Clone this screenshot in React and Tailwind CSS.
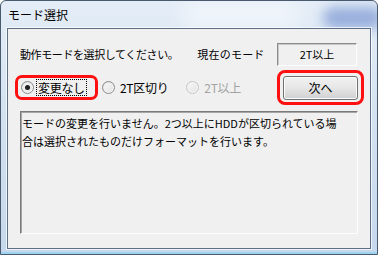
const Radio = ({ checked, disabled }) => (
  <span
    className={`relative flex h-[13px] w-[13px] shrink-0 items-center justify-center rounded-full border ${
      disabled
        ? 'border-[#c4c4c4] bg-[#f4f4f4]'
        : 'border-[#8a8a8a] bg-gradient-to-br from-[#dcdcdc] to-[#ffffff]'
    }`}
  >
    <span className="h-[9px] w-[9px] rounded-full bg-gradient-to-br from-[#f6f6f6] to-[#e4e4e4]" />
    {checked && (
      <span className="absolute h-[5px] w-[5px] rounded-full bg-[#1f1f1f]" />
    )}
  </span>
);

const App = () => {
  return (
    <div className="relative flex h-[255px] w-[378px] flex-col overflow-hidden rounded-t-[6px] border border-[#4a5a6e] bg-gradient-to-b from-[#e4edf7] via-[#d2e1f0] to-[#c6d8ec] font-['Noto_Sans_CJK_JP',sans-serif] text-black">
      {/* glass blur at the top right */}
      <div className="absolute right-[-6px] top-[6px] h-[22px] w-[60px] rounded-full bg-[#7b97d2] opacity-70 blur-[6px]" />
      <div className="absolute left-[180px] top-0 h-[28px] w-[120px] rounded-full bg-white opacity-50 blur-[10px]" />

      <div className="relative flex h-[27px] items-center pl-[7px] text-[12px]">モード選択</div>

      <div className="relative mx-[6px] mb-[5px] flex flex-1 flex-col border border-[#5d6f86] bg-[#f0f0f0] shadow-[0_0_0_1px_rgba(255,255,255,0.7)]">
        <div className="mt-[14px] flex h-[23px] items-center pl-[12px] pr-[13px] text-[11px]">
          <span className="tracking-[-0.4px]">動作モードを選択してください。</span>
          <span className="ml-[19px] tracking-[0.2px]">現在のモード</span>
          <div className="ml-auto flex h-[23px] w-[80px] items-center justify-center border border-b-[#fdfdfd] border-l-[#8c8c8c] border-r-[#fdfdfd] border-t-[#8c8c8c] shadow-[inset_1px_1px_0_#c8c8c8]">
            2T以上
          </div>
        </div>

        <div className="mt-[4px] flex h-[35px] items-center pl-[7px] pr-[6px] text-[12px]">
          <div className="flex h-[25px] w-[83px] items-center rounded-[7px] border-[3px] border-[#ff1010] pl-[3px]">
            <Radio checked />
            <span className="ml-[2px] border border-dotted border-black px-[1px] leading-[15px] tracking-[-0.3px]">変更なし</span>
          </div>
          <div className="ml-[4px] flex items-center">
            <Radio />
            <span className="ml-[5px] tracking-[-0.3px]">2T区切り</span>
          </div>
          <div className="ml-[18px] flex items-center text-[#a3a3a3]">
            <Radio disabled />
            <span className="ml-[5px] tracking-[-0.3px]">2T以上</span>
          </div>
          <div className="ml-auto flex h-[35px] w-[87px] items-center justify-center rounded-[8px] border-[3px] border-[#ff1010]">
            <button className="flex h-[24px] w-[75px] items-center justify-center rounded-[3px] border border-[#707070] bg-gradient-to-b from-[#f2f2f2] via-[#e6e6e6] to-[#d0d0d0] text-[12px] shadow-[inset_0_0_0_1px_#fbfbfb]">
              次へ
            </button>
          </div>
        </div>

        <div className="mx-[12px] mt-[6px] h-[123px] border border-b-[#fdfdfd] border-l-[#7a7a7a] border-r-[#fdfdfd] border-t-[#7a7a7a] bg-[#f0f0f0] px-[1px] py-[2px] text-[11px] leading-[18px] shadow-[inset_1px_1px_0_#a6a6a6]">
          モードの変更を行いません。2つ以上にHDDが区切られている場
          <br />
          合は選択されたものだけフォーマットを行います。
        </div>
      </div>
      <div className="absolute bottom-0 left-0 h-[2px] w-full bg-[#9fd4f0]" />
    </div>
  );
};

export default App;
